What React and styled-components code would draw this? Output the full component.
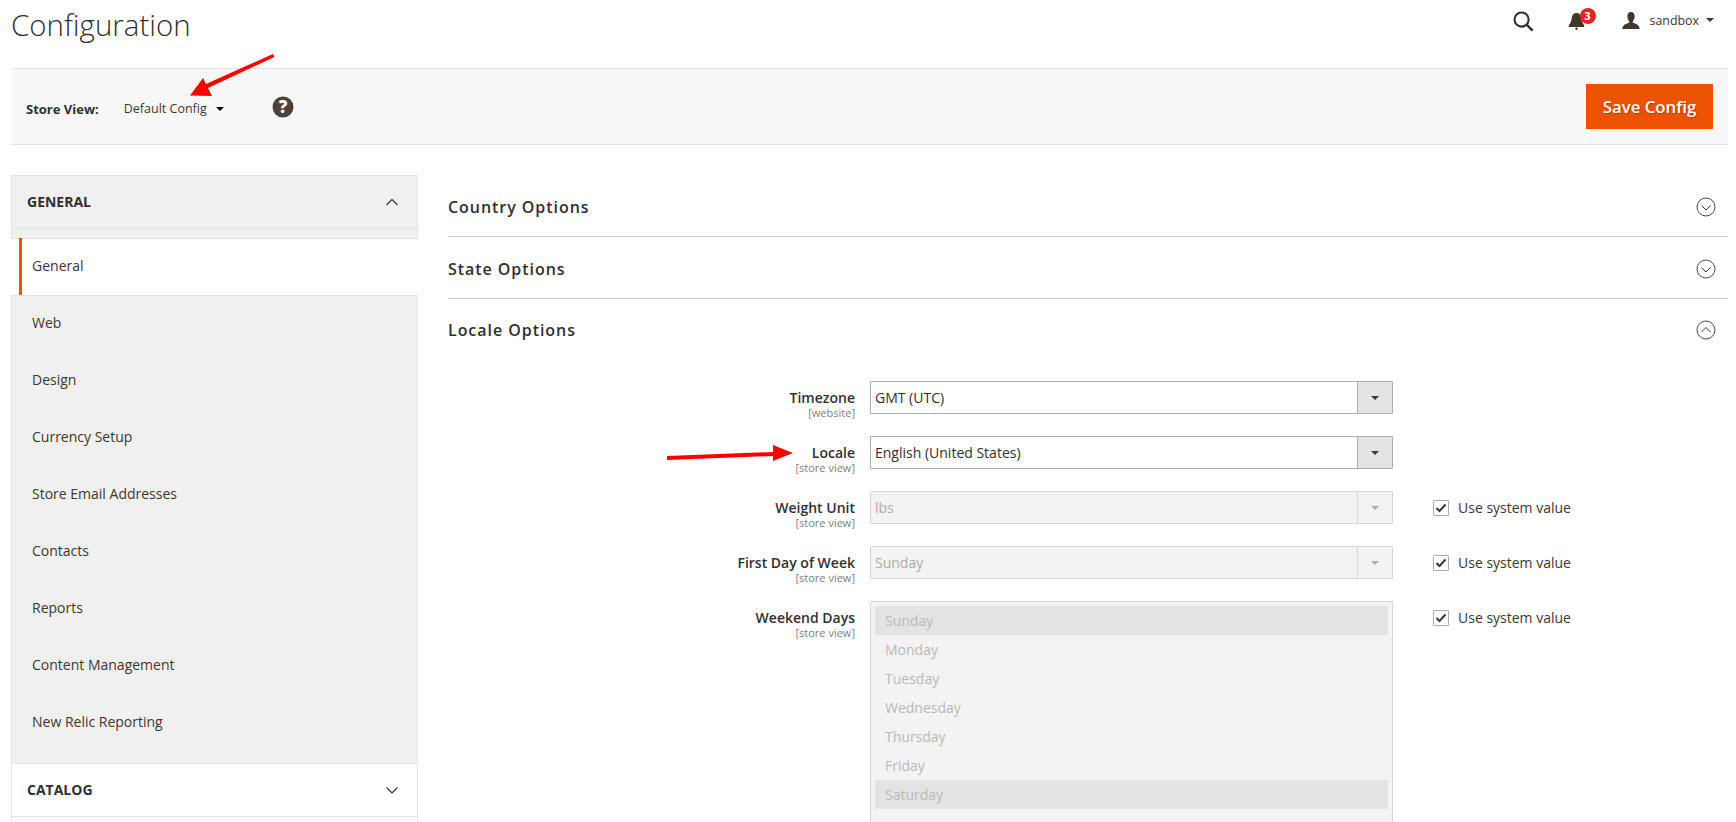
import React from 'react';
import styled, { createGlobalStyle } from 'styled-components';

const Global = createGlobalStyle`
  html, body { margin: 0; padding: 0; background: #fff; overflow: hidden; height: 100%; }
  body { font-family: "Open Sans", "Noto Sans", sans-serif; color: #303030; font-size: 14px; }
  * { box-sizing: border-box; }
`;

const Page = styled.div`
  position: relative;
  width: 1736px;
  height: 822px;
  overflow: hidden;
  padding: 0 8px 0 11px;
`;
const Header = styled.header`
  display: flex;
  align-items: flex-start;
  justify-content: space-between;
  height: 68px;
`;
const Title = styled.h1`
  margin: 6px 0 0;
  font-size: 29.5px;
  line-height: 38px;
  font-weight: 300;
  color: #303030;
`;
const HeaderTools = styled.div`
  display: flex;
  align-items: center;
  height: 40px;
  padding-right: 14px;
`;
const IconSlot = styled.span`
  display: flex;
  position: relative;
  margin-right: ${p => p.$mr}px;
  margin-top: ${p => p.$mt || 0}px;
`;
const Badge = styled.span`
  position: absolute;
  top: -5px;
  left: 12px;
  width: 16px;
  height: 16px;
  border-radius: 50%;
  background: #e22626;
  color: #fff;
  font-size: 11px;
  font-weight: 700;
  line-height: 16px;
  text-align: center;
`;
const UserName = styled.span`
  font-size: 12.4px;
  color: #41362f;
  margin: 0 7px 0 10px;
`;
const Caret = styled.span`
  display: inline-block;
  width: 0;
  height: 0;
  border-left: ${p => p.$size}px solid transparent;
  border-right: ${p => p.$size}px solid transparent;
  border-top: ${p => p.$size}px solid ${p => p.$color || '#41362f'};
`;
const Toolbar = styled.div`
  display: flex;
  align-items: center;
  height: 77px;
  background: #f8f8f8;
  border-top: 1px solid #e3e3e3;
  border-bottom: 1px solid #e3e3e3;
  padding: 0 15px;
`;
const ScopeSwitcher = styled.div`
  display: flex;
  align-items: center;
  margin-top: 4px;
`;
const StoreLabel = styled.span`
  font-size: 13px;
  font-weight: 700;
  color: #303030;
  margin-right: 25px;
`;
const StoreValue = styled.span`
  font-size: 12.5px;
  color: #41362f;
  margin-right: 9px;
`;
const Help = styled.span`
  display: flex;
  margin-left: 48px;
  margin-top: -3px;
`;
const SaveButton = styled.button`
  margin-left: auto;
  width: 127px;
  height: 45px;
  background: #eb5202;
  border: 0;
  color: #fff;
  font-family: inherit;
  font-size: 16.8px;
  font-weight: 600;
  text-shadow: 1px 1px 1px rgba(0,0,0,.25);
`;
const Columns = styled.div`
  display: flex;
  align-items: flex-start;
  margin-top: 30px;
`;
const Sidebar = styled.aside`
  width: 407px;
  flex: none;
  border: 1px solid #e3e3e3;
  border-bottom: 0;
  padding-bottom: 20px;
`;
const GroupHead = styled.div`
  display: flex;
  align-items: center;
  justify-content: space-between;
  height: 53px;
  padding: 0 18px 0 15px;
  background: ${p => (p.$open ? '#f1f1f1' : '#fff')};
  border-bottom: 1px solid #e3e3e3;
`;
const GroupTitle = styled.span`
  font-size: 14px;
  font-weight: 700;
  color: #303030;
  padding-bottom: 2px;
`;
const NavList = styled.ul`
  list-style: none;
  margin: 0;
  padding: 10px 0 11px;
  background: #f1f1f1;
  border-bottom: 1px solid #e3e3e3;
`;
const NavItem = styled.li`
  display: flex;
  align-items: center;
  height: 57px;
  padding-left: 20px;
  padding-bottom: 4px;
  font-size: 14px;
  color: #41362f;
  ${p => p.$active && `
    background: #fff;
    margin: 0 -1px;
    padding-left: 0;
    box-shadow: 0 -1px 0 #e3e3e3;
    border-bottom: 1px solid #e3e3e3;
  `}
`;
const ActiveMarker = styled.span`
  align-self: stretch;
  width: 3px;
  margin: -1px 10px -4px 8px;
  background: #eb5202;
`;
const Main = styled.main`
  flex: 1;
  margin-left: 30px;
`;
const Section = styled.section`
  display: flex;
  align-items: center;
  justify-content: space-between;
  height: 62px;
  border-bottom: ${p => (p.$open ? 0 : '1px solid #cccccc')};
  font-size: 16px;
  font-weight: 600;
  letter-spacing: 0.95px;
  color: #303030;
  padding: ${p => (p.$open ? 0 : 2)}px 12px 0 0;
`;
const Form = styled.div`
  display: flex;
  flex-direction: column;
  margin-top: 20px;
`;
const Row = styled.div`
  display: flex;
  align-items: flex-start;
  height: ${p => (p.$tall ? 'auto' : '55px')};
`;
const LabelCell = styled.div`
  width: 407px;
  flex: none;
  text-align: right;
  padding-top: 8px;
`;
const LabelText = styled.div`
  font-size: 14px;
  font-weight: 600;
  line-height: 17px;
  color: #303030;
`;
const Scope = styled.div`
  font-size: 11px;
  line-height: 13px;
  color: #808080;
`;
const SelectBox = styled.div`
  margin-left: 15px;
  width: 523px;
  height: 33px;
  flex: none;
  display: flex;
  align-items: stretch;
  border: 1px solid ${p => (p.$disabled ? '#d6d6d6' : '#adadad')};
  border-radius: 1px;
  background: ${p => (p.$disabled ? '#f3f3f3' : '#fff')};
`;
const SelectValue = styled.div`
  flex: 1;
  display: flex;
  align-items: center;
  padding-left: 4px;
  font-size: 14px;
  color: ${p => (p.$disabled ? '#adadad' : '#303030')};
`;
const SelectHandle = styled.div`
  width: 35px;
  display: flex;
  align-items: center;
  justify-content: center;
  border-left: 1px solid ${p => (p.$disabled ? '#d6d6d6' : '#adadad')};
  background: ${p => (p.$disabled ? '#f3f3f3' : '#e3e3e3')};
`;
const UseSystem = styled.label`
  display: flex;
  align-items: center;
  gap: 9px;
  margin-left: 40px;
  height: 33px;
  font-size: 14px;
  color: #41362f;
`;
const CheckBox = styled.span`
  display: flex;
  align-items: center;
  justify-content: center;
  width: 16px;
  height: 16px;
  border: 1px solid #adadad;
  border-radius: 1px;
  background: #fff;
`;
const MultiBox = styled.div`
  margin-left: 15px;
  width: 523px;
  height: 300px;
  flex: none;
  padding: 4px;
  border: 1px solid #d6d6d6;
  border-radius: 1px;
  background: #f3f3f3;
`;
const MultiOption = styled.div`
  height: 29px;
  line-height: 29px;
  padding-left: 10px;
  font-size: 14px;
  color: #b9b9b9;
  background: ${p => (p.$selected ? '#e3e3e3' : 'transparent')};
`;
const Annotations = styled.svg`
  position: absolute;
  left: 0;
  top: 0;
  pointer-events: none;
`;

const Chevron = ({ up }) => (
  <svg width="14" height="14" viewBox="0 0 14 14" fill="none" stroke="#303030" strokeWidth="1.2">
    <path d={up ? 'M1.5 10 L7 4.5 L12.5 10' : 'M1.5 4.5 L7 10 L12.5 4.5'} />
  </svg>
);
const CircleChevron = ({ up }) => (
  <svg width="20" height="20" viewBox="0 0 20 20" fill="none" stroke="#41362f" strokeWidth="1">
    <circle cx="10" cy="10" r="9" stroke="#514943" />
    <path d={up ? 'M5.5 12 L10 7.5 L14.5 12' : 'M5.5 8.5 L10 13 L14.5 8.5'} />
  </svg>
);
const Check = () => (
  <svg width="12" height="12" viewBox="0 0 12 12" fill="none" stroke="#41362f" strokeWidth="2">
    <path d="M1.5 6 L4.5 9 L10.5 2.5" />
  </svg>
);
const Search = () => (
  <svg width="21" height="21" viewBox="0 0 22 22" fill="none" stroke="#303030">
    <circle cx="9" cy="9" r="7.4" strokeWidth="2.2" />
    <path d="M14 14 L20.5 20.5" strokeWidth="2.6" />
  </svg>
);
const Bell = () => (
  <svg width="17" height="17" viewBox="0 0 17 17" fill="#41362f">
    <path d="M8.5 0 C5.5 0 4 2 3.7 5 C3.4 8.5 2.4 10.5 .8 12.2 L.8 14 L16.2 14 L16.2 12.2 C14.6 10.5 13.6 8.5 13.3 5 C13 2 11.5 0 8.5 0 Z" />
    <circle cx="8.5" cy="15.8" r="1.2" />
  </svg>
);
const User = () => (
  <svg width="18" height="17" viewBox="0 0 20 19" fill="#41362f">
    <path d="M10 0 C6.8 0 6 2.5 6 5 C6 7.5 7 9.3 8 10.3 L8 12 C5 13 .8 14 .2 19 L19.8 19 C19.2 14 15 13 12 12 L12 10.3 C13 9.3 14 7.5 14 5 C14 2.5 13.2 0 10 0 Z" />
  </svg>
);
const HelpIcon = () => (
  <svg width="22" height="22" viewBox="0 0 22 22">
    <circle cx="11" cy="11" r="10.5" fill="#4b423c" />
    <text x="11" y="17" textAnchor="middle" fill="#fff" fontFamily="Open Sans" fontWeight="800" fontSize="17">?</text>
  </svg>
);

const items = ['Web', 'Design', 'Currency Setup', 'Store Email Addresses', 'Contacts', 'Reports', 'Content Management', 'New Relic Reporting'];
const days = ['Sunday', 'Monday', 'Tuesday', 'Wednesday', 'Thursday', 'Friday', 'Saturday'];

const Field = ({ label, scope, children }) => (
  <>
    <LabelCell>
      <LabelText>{label}</LabelText>
      <Scope>[{scope}]</Scope>
    </LabelCell>
    {children}
  </>
);
const SelectField = ({ value, disabled }) => (
  <SelectBox $disabled={disabled}>
    <SelectValue $disabled={disabled}>{value}</SelectValue>
    <SelectHandle $disabled={disabled}><Caret $size={4.5} $color={disabled ? '#adadad' : '#41362f'} /></SelectHandle>
  </SelectBox>
);
const SystemValue = () => (
  <UseSystem><CheckBox><Check /></CheckBox>Use system value</UseSystem>
);

export default function App() {
  return (
    <Page>
      <Global />
      <Header>
        <Title>Configuration</Title>
        <HeaderTools>
          <IconSlot $mr={34} $mt={2}><Search /></IconSlot>
          <IconSlot $mr={37} $mt={3}><Bell /><Badge>3</Badge></IconSlot>
          <IconSlot $mr={0}><User /></IconSlot>
          <UserName>sandbox</UserName>
          <Caret $size={4} />
        </HeaderTools>
      </Header>
      <Toolbar>
        <ScopeSwitcher>
          <StoreLabel>Store View:</StoreLabel>
          <StoreValue>Default Config</StoreValue>
          <Caret $size={4} $color="#000" />
          <Help><HelpIcon /></Help>
        </ScopeSwitcher>
        <SaveButton>Save Config</SaveButton>
      </Toolbar>
      <Columns>
        <Sidebar>
          <GroupHead $open><GroupTitle>GENERAL</GroupTitle><Chevron up /></GroupHead>
          <NavList>
            <NavItem $active><ActiveMarker />General</NavItem>
            {items.map(i => <NavItem key={i}>{i}</NavItem>)}
          </NavList>
          <GroupHead><GroupTitle>CATALOG</GroupTitle><Chevron /></GroupHead>
        </Sidebar>
        <Main>
          <Section>Country Options<CircleChevron /></Section>
          <Section>State Options<CircleChevron /></Section>
          <Section $open>Locale Options<CircleChevron up /></Section>
          <Form>
            <Row><Field label="Timezone" scope="website"><SelectField value="GMT (UTC)" /></Field></Row>
            <Row><Field label="Locale" scope="store view"><SelectField value="English (United States)" /></Field></Row>
            <Row><Field label="Weight Unit" scope="store view"><SelectField disabled value="lbs" /><SystemValue /></Field></Row>
            <Row><Field label="First Day of Week" scope="store view"><SelectField disabled value="Sunday" /><SystemValue /></Field></Row>
            <Row $tall>
              <Field label="Weekend Days" scope="store view">
                <MultiBox>
                  {days.map((d, i) => <MultiOption key={d} $selected={i === 0 || i === 6}>{d}</MultiOption>)}
                </MultiBox>
                <SystemValue />
              </Field>
            </Row>
          </Form>
        </Main>
      </Columns>
      <Annotations width="1736" height="822" viewBox="0 0 1736 822">
        <g fill="#fe0000" stroke="none">
          <path d="M273 54 L274.5 57 L208 88 L212 96 L190 95.5 L203 78 L206 84 Z" />
          <path d="M667 456 L667 460 L773 456 L773 461 L793 453 L773 445 L773 452 Z" />
        </g>
      </Annotations>
    </Page>
  );
}
